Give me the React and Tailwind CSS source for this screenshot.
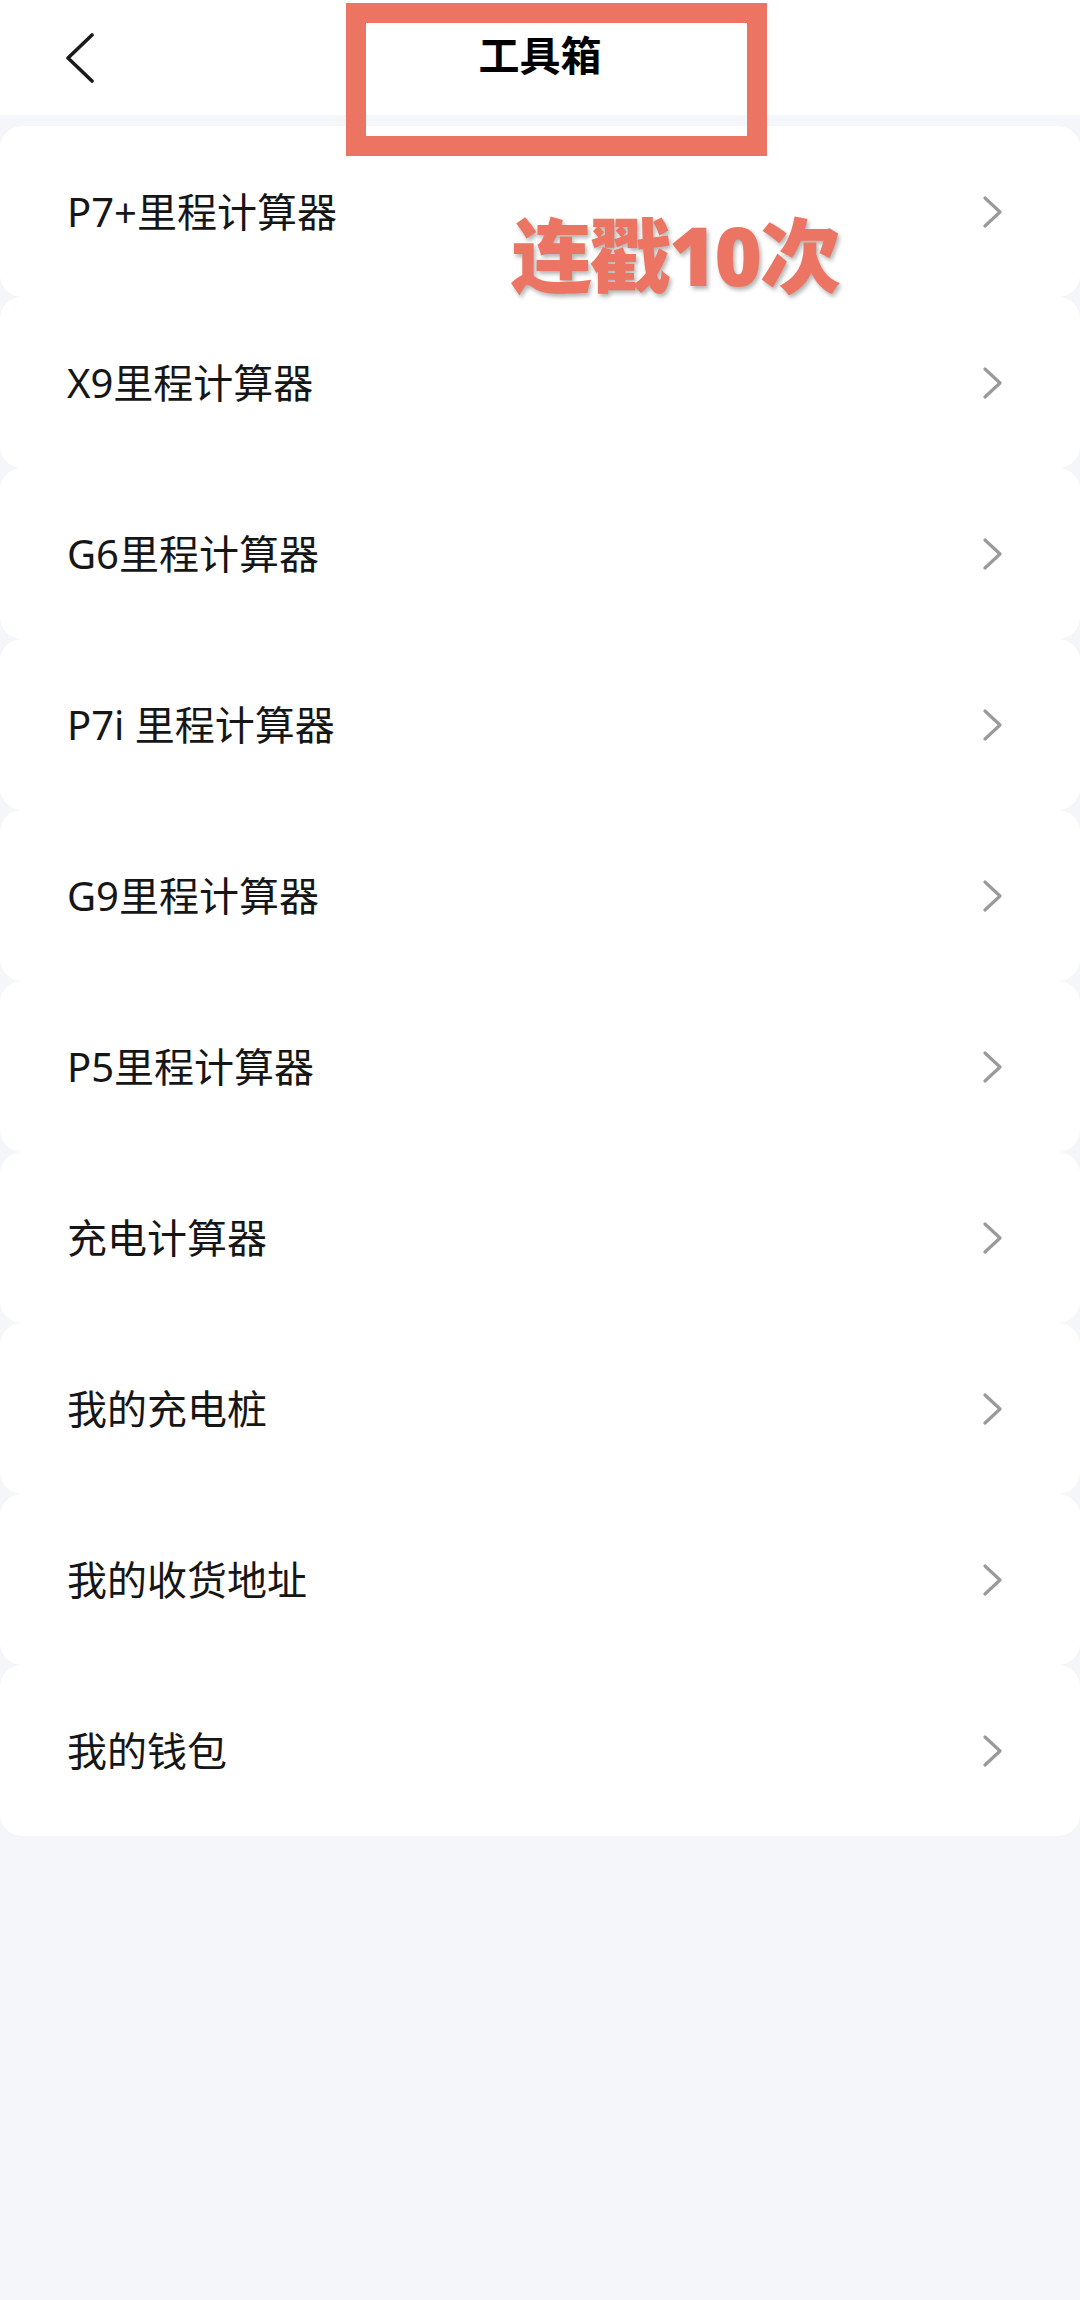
const tools = [
  "P7+里程计算器",
  "X9里程计算器",
  "G6里程计算器",
  "P7i 里程计算器",
  "G9里程计算器",
  "P5里程计算器",
  "充电计算器",
  "我的充电桩",
  "我的收货地址",
  "我的钱包",
];

function BackIcon() {
  return (
    <svg width="30" height="50" viewBox="0 0 30 50" fill="none" className="text-[#1a1a1a]">
      <polyline points="27,2 3,25 27,48" stroke="currentColor" strokeWidth="3.6" strokeLinecap="round" strokeLinejoin="round" />
    </svg>
  );
}

function Arrow() {
  return (
    <svg width="22" height="32" viewBox="0 0 22 32" fill="none" className="text-[#9a9a9a]">
      <polyline points="3,2 18,16 3,30" stroke="currentColor" strokeWidth="3.2" strokeLinecap="round" strokeLinejoin="round" />
    </svg>
  );
}

export default function App() {
  return (
    <div
      className="relative min-h-[2300px] w-[1080px] bg-[#f5f6fa]"
      style={{ fontFamily: '"Noto Sans", "Noto Sans CJK SC", sans-serif' }}
    >
      {/* header */}
      <div className="h-[115px] bg-white grid grid-cols-[1fr_auto_1fr] items-center px-[65px]">
        <BackIcon />
        <h1 className="text-[41px] font-bold text-black leading-none -mt-[4px]">工具箱</h1>
        <div />
      </div>

      <div className="pt-[11px]">
        {tools.map((name) => (
          <div
            key={name}
            className="h-[171px] bg-white rounded-[22px] flex items-center justify-between pl-[67px] pr-[76px]"
          >
            <span className="text-[40px] text-[#161616] leading-none">{name}</span>
            <Arrow />
          </div>
        ))}
      </div>

      {/* annotation overlay */}
      <div className="absolute left-[346px] top-[3px] w-[421px] h-[153px] border-[20px] border-[#ec7462]" />
      <div
        className="absolute left-[511px] top-[214px] text-[81px] font-black text-[#ec7462] leading-none tracking-[-2px]"
        style={{ textShadow: "2px 3px 4px rgba(0,0,0,0.3)" }}
      >
        连戳10次
      </div>
    </div>
  );
}
